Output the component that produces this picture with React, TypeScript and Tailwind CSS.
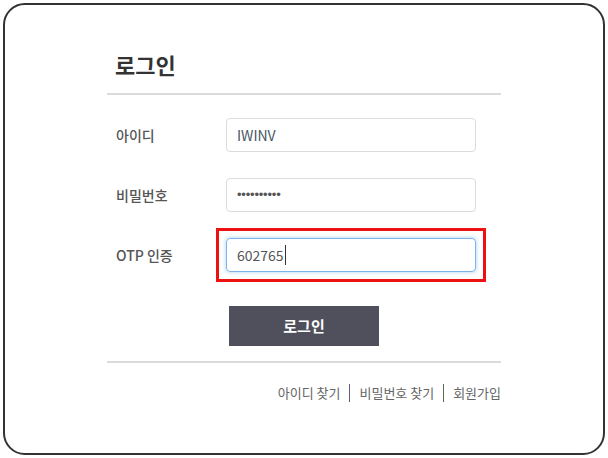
import React from "react";

const font = { fontFamily: '"Noto Sans CJK KR", "Noto Sans", sans-serif' };

function Row({ label, children }: { label: string; children: React.ReactNode }) {
  return (
    <div className="flex items-center h-[34px]">
      <div className="w-[119px] pl-[9px] text-[14px] font-medium text-[#555]">{label}</div>
      <div className="relative w-[250px] h-[34px]">{children}</div>
    </div>
  );
}

export default function App() {
  return (
    <div className="w-[608px] h-[458px] bg-white p-[3px]" style={font}>
      <div className="h-full border-2 border-[#333] rounded-[22px] bg-white">
        <div className="w-[394px] mx-auto pt-[43px]">
          {/* Title */}
          <h1 className="pl-[8px] pb-[13px] text-[22px] leading-[32px] font-bold text-[#333] border-b-2 border-[#dadada]">
            로그인
          </h1>

          {/* Form */}
          <div className="mt-[23px] flex flex-col gap-[26px]">
            <Row label="아이디">
              <input
                readOnly
                value="IWINV"
                className="w-full h-full border border-[#dcdcdc] rounded-[4px] pl-[10px] text-[14px] text-[#4a5563] outline-none"
                style={font}
              />
            </Row>
            <Row label="비밀번호">
              <div className="w-full h-full border border-[#dcdcdc] rounded-[4px] pl-[10px] flex items-center text-[13px] text-[#555] tracking-[-0.2px]" style={{ fontFamily: '"Liberation Sans", sans-serif' }}>
                ••••••••••
              </div>
            </Row>
            <Row label="OTP 인증">
              <div className="w-full h-full border border-[#7fb4ea] rounded-[4px] pl-[10px] flex items-center text-[14px] text-[#555] shadow-[0_0_4px_rgba(102,175,233,0.6)]">
                602765
                <span className="inline-block w-px h-[20px] bg-[#333] ml-px" />
              </div>
              <div className="absolute -inset-[10px] border-[3px] border-[#ee1111] pointer-events-none" />
            </Row>
          </div>

          {/* Submit */}
          <button
            className="block mx-auto mt-[34px] w-[150px] h-[40px] bg-[#4f505b] text-white text-[15px] font-bold"
            style={font}
          >
            로그인
          </button>

          <div className="mt-[15px] border-t-2 border-[#dadada]" />

          {/* Links */}
          <div className="mt-[20px] flex items-center justify-end text-[13px] text-[#666]">
            <span>아이디 찾기</span>
            <span className="mx-[9px] w-px h-[18px] bg-[#6a5a7a]" />
            <span>비밀번호 찾기</span>
            <span className="mx-[9px] w-px h-[18px] bg-[#5a6a4a]" />
            <span>회원가입</span>
          </div>
        </div>
      </div>
    </div>
  );
}
